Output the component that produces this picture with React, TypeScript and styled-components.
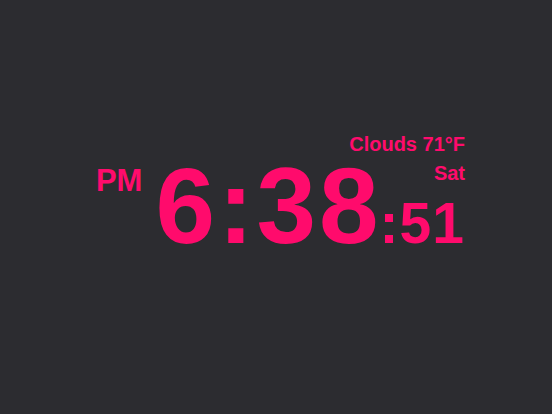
import React from "react";
import styled, { createGlobalStyle } from "styled-components";

const GlobalStyle = createGlobalStyle`
  html, body {
    margin: 0;
    padding: 0;
    background: #2c2c30;
  }
  #root {
    min-height: 414px;
  }
`;

const Page = styled.div`
  width: 552px;
  height: 414px;
  box-sizing: border-box;
  background: #2c2c30;
  display: flex;
  align-items: flex-start;
  justify-content: flex-end;
  padding: 134px 87px 0 0;
  font-family: "Liberation Sans", Arial, Helvetica, sans-serif;
  font-weight: 700;
  color: #ff0b6c;
`;

const Clock = styled.div`
  display: flex;
  flex-direction: column;
  align-items: flex-end;
`;

const InfoLine = styled.div<{ $gap?: number }>`
  font-size: 20px;
  line-height: 20px;
  margin-top: ${(p) => p.$gap ?? 0}px;
  white-space: nowrap;
`;

const TimeRow = styled.div`
  display: flex;
  align-items: baseline;
  margin-top: -17px;
  white-space: nowrap;
`;

const Meridiem = styled.div`
  align-self: flex-start;
  font-size: 31px;
  line-height: 0.75;
  margin-top: 3px;
  margin-right: 13px;
`;

const MainTime = styled.div`
  font-size: 107px;
  line-height: 0.75;
  letter-spacing: 3px;
`;

const Seconds = styled.div`
  font-size: 57px;
  line-height: 0.75;
  letter-spacing: 1px;
  margin-left: -2px;
`;

export default function App() {
  return (
    <>
      <GlobalStyle />
      <Page>
        <Clock>
          <InfoLine>Clouds 71°F</InfoLine>
          <InfoLine $gap={9}>Sat</InfoLine>
          <TimeRow>
            <Meridiem>PM</Meridiem>
            <MainTime>6:38</MainTime>
            <Seconds>:51</Seconds>
          </TimeRow>
        </Clock>
      </Page>
    </>
  );
}
